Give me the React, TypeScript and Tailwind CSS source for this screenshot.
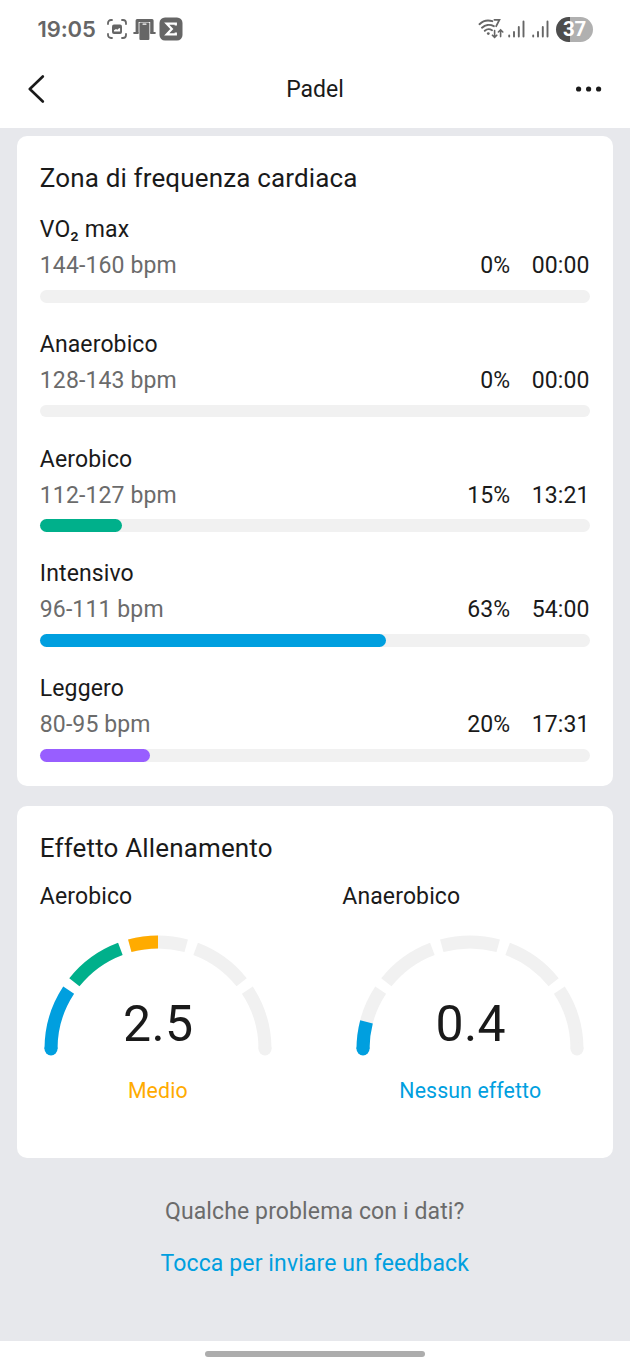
type Zone = {
  name: string;
  range: string;
  percent: number;
  time: string;
  color: string;
};

const zones: Zone[] = [
  { name: "VO₂ max", range: "144-160 bpm", percent: 0, time: "00:00", color: "bg-[#ff5a3c]" },
  { name: "Anaerobico", range: "128-143 bpm", percent: 0, time: "00:00", color: "bg-[#ffab00]" },
  { name: "Aerobico", range: "112-127 bpm", percent: 15, time: "13:21", color: "bg-[#00b08b]" },
  { name: "Intensivo", range: "96-111 bpm", percent: 63, time: "54:00", color: "bg-[#009fdf]" },
  { name: "Leggero", range: "80-95 bpm", percent: 20, time: "17:31", color: "bg-[#985eff]" },
];

// start and end of each gauge segment, degrees from the left end
const segments = [
  { from: 0, to: 33.4, color: "#009fdf" },
  { from: 38.6, to: 69.4, color: "#00b08b" },
  { from: 74.7, to: 105.3, color: "#ffab00" },
  { from: 110.6, to: 141.4, color: "#ff7a00" },
  { from: 146.6, to: 180, color: "#f04040" },
];

const CX = 114;
const CY = 114;
const R = 107;

function point(deg: number) {
  const a = (deg * Math.PI) / 180;
  return `${(CX - R * Math.cos(a)).toFixed(2)} ${(CY - R * Math.sin(a)).toFixed(2)}`;
}

function arc(from: number, to: number) {
  return `M${point(from)}A${R} ${R} 0 0 1 ${point(to)}`;
}

function Gauge({ value, fillTo }: { value: string; fillTo: number }) {
  return (
    <div className="relative w-[228px] h-[122px]">
      <svg viewBox="0 0 228 122" className="w-full h-full" fill="none" strokeWidth={13}>
        {segments.map((s) => (
          <g key={s.from}>
            <path d={arc(s.from, s.to)} stroke="#f1f1f1" />
            {fillTo > s.from && (
              <path d={arc(s.from, Math.min(fillTo, s.to))} stroke={s.color} />
            )}
          </g>
        ))}
        {/* rounded outer ends */}
        <circle cx={CX + R} cy={CY} r={6.5} fill="#f1f1f1" />
        <circle cx={CX - R} cy={CY} r={6.5} fill={segments[0].color} />
      </svg>
      <div className="absolute inset-x-0 top-[59.5px] pl-px text-center text-[50px] leading-[60px] tracking-[0.4px] text-[#1a1a1a]">
        {value}
      </div>
    </div>
  );
}

function Signal() {
  return (
    <svg viewBox="0 0 17 18" className="w-[17px] h-[18px]" stroke="#666" strokeWidth={1.9} strokeLinecap="round">
      <path d="M1.2 15.5v1M6 12v4.5M10.8 7v9.5M15.5 1.5v15" />
    </svg>
  );
}

function StatusBar() {
  return (
    <div className="flex items-center h-[50px] pt-2 pl-[37.5px] pr-[37px]">
      <span className="w-[68.5px] font-['Inter',sans-serif] font-semibold text-[22px] leading-[26px] tracking-[-0.1px] text-[#666]">
        19:05
      </span>
      <svg viewBox="0 0 22 22" className="w-[22px] h-[22px]" fill="none" stroke="#666" strokeWidth={1.8} strokeLinecap="round">
        <path d="M2 6V5a3 3 0 0 1 3-3h1M16 2h1a3 3 0 0 1 3 3v1M20 16v1a3 3 0 0 1-3 3h-1M6 20H5a3 3 0 0 1-3-3v-1" />
        <rect x="6" y="6.5" width="10" height="9.5" rx="2" fill="#666" stroke="none" />
        <path d="M8 13.5v-1.3l2-1.2 1.3.8 2-1.8.8.5v3z" fill="#fff" stroke="none" />
      </svg>
      <svg viewBox="0 0 24 24" className="w-6 h-6 ml-[5px]" fill="#666">
        <path d="M2.6 3.6a1.5 1.5 0 0 1 1.5-1.5h15a1.5 1.5 0 0 1 1.5 1.5v12.2h-3.4V5H5.6v10.8h-3z" />
        <rect x="0.4" y="15" width="5.2" height="2" rx="0.5" />
        <rect x="17.2" y="15" width="5.4" height="2" rx="0.5" />
        <rect x="6.4" y="5.6" width="10" height="17.4" rx="1" />
        <rect x="9.5" y="6.6" width="4" height="1.1" rx="0.5" fill="#fff" />
      </svg>
      <svg viewBox="0 0 24 24" className="w-6 h-6 ml-[2px]">
        <rect x="0.5" y="0.5" width="23" height="23" rx="5.5" fill="#666" />
        <path d="M16.8 8.6V6.7H7.8l5 5.3-5 5.3h9v-1.9" fill="none" stroke="#fff" strokeWidth={2.3} />
      </svg>
      <div className="flex items-center ml-auto">
        <svg viewBox="0 0 26 22" className="w-[26px] h-[22px]" fill="none" stroke="#666" strokeWidth={1.9} strokeLinecap="round">
          <path d="M1.5 6.2C5 2.8 10 1.8 14.3 3.2M4 9.7c3.2-3 8-3.6 11.8-1.5M6.8 12.8c2-1.8 5-2 7.2-.6" />
          <circle cx="10.3" cy="15.6" r="1.4" fill="#666" stroke="none" />
          <path d="M16.4 1.8h5l-3.2 6.4" strokeWidth={1.8} />
          <path d="M16.6 12.6v6.6M14.4 17.2l2.2 2.2 2.2-2.2M22.6 18.6V12M20.4 14l2.2-2.2 2.2 2.2" strokeWidth={1.6} />
        </svg>
        <div className="flex gap-[7px] ml-1">
          <Signal />
          <Signal />
        </div>
        <div className="flex items-center justify-center w-[37px] h-[25px] ml-[7px] rounded-full bg-linear-to-r from-[#4d4d4d] from-37% to-[#b0b0b0] to-37% font-['Roboto',sans-serif] font-bold text-[20.5px] leading-none tracking-[-0.3px] text-white">
          37
        </div>
      </div>
    </div>
  );
}

function NavBar() {
  return (
    <div className="flex items-center h-[78px] pl-[27px] pr-[28px]">
      <svg viewBox="0 0 18 28" className="w-[18px] h-7" fill="none" stroke="#1a1a1a" strokeWidth={2.6} strokeLinecap="round" strokeLinejoin="round">
        <path d="M15.8 1.5 2.8 14l13 12.5" />
      </svg>
      <h1 className="flex-1 pt-[2px] pl-[9px] text-center text-[23px] tracking-[0px]">Padel</h1>
      <svg viewBox="0 0 26 6" className="w-[26px] h-1.5" fill="#1a1a1a">
        <circle cx="2.6" cy="3" r="2.6" />
        <circle cx="12.6" cy="3" r="2.6" />
        <circle cx="22.6" cy="3" r="2.6" />
      </svg>
    </div>
  );
}

function ZoneRow({ zone }: { zone: Zone }) {
  return (
    <div>
      <div className="leading-9">{zone.name}</div>
      <div className="flex leading-9">
        <span className="text-[#6b6b6b]">{zone.range}</span>
        <span className="ml-auto">{zone.percent}%</span>
        <span className="w-[58px] ml-[21.5px]">{zone.time}</span>
      </div>
      <div className="h-[12.7px] mt-[5.7px] rounded-full bg-[#f1f1f1]">
        <div className={`h-full rounded-full ${zone.color}`} style={{ width: `${zone.percent}%` }} />
      </div>
    </div>
  );
}

export default function App() {
  return (
    <div className="flex flex-col w-[630px] h-[1366px] bg-[#e7e8ec] font-['Roboto',sans-serif] text-[23px] tracking-[0.12px] text-[#1a1a1a]">
      <header className="bg-white">
        <StatusBar />
        <NavBar />
      </header>

      <main className="flex-1 pl-[16.5px] pr-[17px] pt-2">
        <section className="h-[650px] pt-6 px-[23.3px] rounded-[10px] bg-white">
          <h2 className="mb-[16.3px] text-[26px] leading-9 tracking-[0.15px]">Zona di frequenza cardiaca</h2>
          <div className="flex flex-col gap-[24.35px]">
            {zones.map((zone) => (
              <ZoneRow key={zone.name} zone={zone} />
            ))}
          </div>
        </section>

        <section className="h-[351.5px] mt-5 pt-6 px-[23.3px] rounded-[10px] bg-white">
          <h2 className="mb-[13px] text-[26px] leading-9 tracking-[0.15px]">Effetto Allenamento</h2>
          <div className="flex">
            <div className="w-[302.5px]">
              <h3 className="leading-9">Aerobico</h3>
              <div className="flex flex-col items-center w-[228px] ml-1 mt-[19.5px]">
                <Gauge value="2.5" fillTo={90} />
                <div className="mt-4 leading-9 text-[21.3px] text-[#ffab00]">Medio</div>
              </div>
            </div>
            <div>
              <h3 className="leading-9">Anaerobico</h3>
              <div className="flex flex-col items-center w-[228px] ml-[14px] mt-[19.5px]">
                <Gauge value="0.4" fillTo={14.7} />
                <div className="mt-4 leading-9 text-[21.3px] text-[#009fdf]">Nessun effetto</div>
              </div>
            </div>
          </div>
        </section>

        <footer className="flex flex-col items-center gap-4 mt-[36.5px]">
          <p className="leading-9 text-[#6b6b6b]">Qualche problema con i dati?</p>
          <a className="leading-9 text-[#009fdf]">Tocca per inviare un feedback</a>
        </footer>
      </main>

      <div className="flex justify-center h-[25px] pt-[9.5px] bg-white">
        <div className="w-[220px] h-[6.5px] rounded-full bg-[#adadad]" />
      </div>
    </div>
  );
}
